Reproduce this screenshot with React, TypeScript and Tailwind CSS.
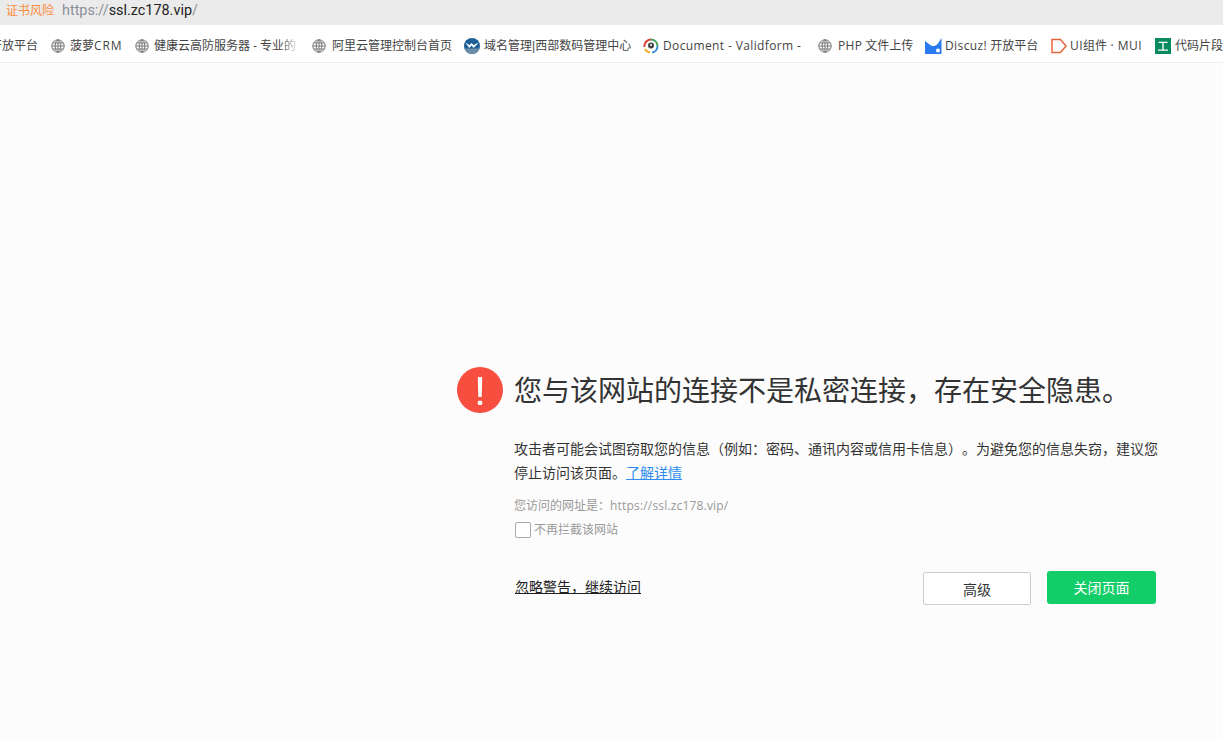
import React from "react";

const font = { fontFamily: '"Open Sans", "Noto Sans CJK SC", sans-serif' };

function GlobeIcon() {
  return (
    <svg width="14" height="14" viewBox="0 0 14 14" fill="none" stroke="#777" strokeWidth="1" className="shrink-0">
      <circle cx="7" cy="7" r="6.2" />
      <ellipse cx="7" cy="7" rx="2.8" ry="6.2" />
      <path d="M7 .8v12.4M.8 7h12.4M1.6 4h10.8M1.6 10h10.8" />
    </svg>
  );
}

function WestIcon() {
  return (
    <svg width="16" height="16" viewBox="0 0 16 16" className="shrink-0">
      <circle cx="8" cy="8" r="8" fill="#1d5f96" />
      <path d="M0.5 10.500h15a8 8 0 0 1-15 0z" fill="#6d8ea8" />
      <path d="M2.500 5.500l2.800 4 2.200-2.600 2.200 2.600 3.800-4-3.700 2-2.300-2-2.200 2z" fill="#fff" stroke="#fff" strokeWidth="0.8" />
    </svg>
  );
}

function ValidIcon() {
  return (
    <svg width="16" height="16" viewBox="0 0 16 16" className="shrink-0" fill="none">
      <path d="M1.500 9A6.500 6.500 0 0 1 8 1.500" stroke="#d9453a" strokeWidth="2" />
      <path d="M8 1.500A6.500 6.500 0 0 1 14.500 8" stroke="#4aa35a" strokeWidth="2" />
      <path d="M14.500 8A6.500 6.500 0 0 1 9 14.500" stroke="#3d8fd6" strokeWidth="2" />
      <path d="M7 14.500A6.500 6.500 0 0 1 2 11" stroke="#f1ac2c" strokeWidth="2" />
      <circle cx="8" cy="7.500" r="3" fill="#444" />
      <circle cx="8" cy="7" r="1" fill="#fff" />
    </svg>
  );
}

function DiscuzIcon() {
  return (
    <svg width="17" height="16" viewBox="0 0 17 16" className="shrink-0">
      <path d="M0 3l6 4.500c2.500 1.500 5.500 0 7-2L16.500 0v16H0z" fill="#2a7bf0" />
      <circle cx="13" cy="12.500" r="2" fill="#fff" />
    </svg>
  );
}

function MuiIcon() {
  return (
    <svg width="16" height="16" viewBox="0 0 16 16" fill="none" className="shrink-0">
      <path d="M1 1.500h8.500L15 8l-5.500 6.500H1z" stroke="#e8643c" strokeWidth="1.500" />
    </svg>
  );
}

function CodeIcon() {
  return (
    <svg width="16" height="16" viewBox="0 0 16 16" className="shrink-0">
      <rect width="16" height="16" fill="#0a8a5f" />
      <path d="M3.500 3.800h9v1.200H8.700v6.500H13v1.200H3v-1.200h4.300V5H3.500z" fill="#fff" />
    </svg>
  );
}

type Item = { icon: React.ReactNode; text: React.ReactNode; width: string; gap: string; fade?: boolean };

function Bookmark({ icon, text, width, gap, fade }: Item) {
  return (
    <div className={`relative flex shrink-0 items-center overflow-hidden whitespace-nowrap ${width} ${gap}`}>
      {icon}
      <span className="text-[12px] text-[#444]">{text}</span>
      {fade && <div className="absolute right-0 top-0 h-full w-5 bg-gradient-to-r from-transparent to-white" />}
    </div>
  );
}

export default function App() {
  return (
    <div className="flex h-[739px] w-[1223px] flex-col overflow-hidden bg-[#fcfcfc] [text-spacing-trim:space-all]" style={font}>
      <div className="flex h-[25px] shrink-0 items-center bg-[#ebebeb] pb-[3px] pl-[6px]">
        <span className="w-[56px] text-[12px] text-[#f98b3d]">证书风险</span>
        <span className="font-['Roboto'] text-[14.4px] text-[#8a8f99]">
          https://<span className="text-[#222]">ssl.zc178.vip</span>/
        </span>
      </div>

      <div className="flex h-[38px] shrink-0 items-center overflow-hidden border-b border-[#eeeeee] bg-white pt-[5px]">
        <div className="ml-[-10px] w-[61px] shrink-0 whitespace-nowrap text-[12px] text-[#444]">开放平台</div>
        <Bookmark
          icon={<GlobeIcon />}
          text={
            <>
              菠萝<span className="tracking-[0.9px]">CRM</span>
            </>
          }
          width="w-[84px]"
          gap="gap-[5px]"
        />
        <Bookmark icon={<GlobeIcon />} text="健康云高防服务器 - 专业的" width="w-[165px]" gap="gap-[5px]" fade />
        <div className="w-[12px] shrink-0" />
        <Bookmark icon={<GlobeIcon />} text="阿里云管理控制台首页" width="w-[152px]" gap="gap-[6px]" />
        <Bookmark
          icon={<WestIcon />}
          text={
            <>
              域名管理<span className="font-['Liberation_Sans']">|</span>西部数码管理中心
            </>
          }
          width="w-[179px]"
          gap="gap-[4px]"
        />
        <Bookmark
          icon={<ValidIcon />}
          text={<span className="tracking-[0.37px]">Document - Validform -</span>}
          width="w-[175px]"
          gap="gap-[4px]"
        />
        <Bookmark
          icon={<GlobeIcon />}
          text={
            <>
              <span className="tracking-[0.3px]">PHP</span> 文件上传
            </>
          }
          width="w-[107px]"
          gap="gap-[6px]"
        />
        <Bookmark
          icon={<DiscuzIcon />}
          text={
            <>
              <span className="tracking-[0.4px]">Discuz!</span> 开放平台
            </>
          }
          width="w-[126px]"
          gap="gap-[3px]"
        />
        <Bookmark
          icon={<MuiIcon />}
          text={
            <>
              <span className="tracking-[0.4px]">UI</span>组件<span className="tracking-[0.5px]"> · MUI</span>
            </>
          }
          width="w-[104px]"
          gap="gap-[3px]"
        />
        <Bookmark icon={<CodeIcon />} text="代码片段" width="w-[68px]" gap="gap-[4px]" />
      </div>

      <div className="flex flex-col pl-[457px] pt-[304px]">
        <div className="flex items-center gap-[11px]">
          <div className="flex h-[46px] w-[46px] shrink-0 items-center justify-center rounded-full bg-[#f74e3f]">
            <svg width="6" height="30" viewBox="0 0 6 30">
              <path d="M.8 2h4.400l-.5 20h-3.400z" fill="#fff" />
              <circle cx="3" cy="27.800" r="2.400" fill="#fff" />
            </svg>
          </div>
          <h1 className="whitespace-nowrap text-[28px] font-normal leading-[46px] text-[#333]">
            您与该网站的连接不是私密连接，存在安全隐患。
          </h1>
        </div>

        <div className="ml-[57px] flex flex-col">
          <p className="mt-[24px] w-[650px] text-[14px] leading-[24px] text-[#333]">
            攻击者可能会试图窃取您的信息（例如：密码、通讯内容或信用卡信息）。为避免您的信息失窃，建议您
            <br />
            停止访问该页面。<span className="text-[#2f8cf0] underline">了解详情</span>
          </p>
          <p className="mt-[9px] text-[12px] leading-[24px] text-[#999]">
            您访问的网址是：<span className="tracking-[0.18px]">https://ssl.zc178.vip/</span>
          </p>
          <label className="flex h-[24px] items-center gap-[3px] text-[12px] text-[#999]">
            <span className="ml-[1px] h-[16px] w-[16px] rounded-[2px] border border-[#aaa] bg-white" />
            不再拦截该网站
          </label>

          <div className="mt-[28px] flex w-[642px] items-center">
            <a className="mb-[2px] ml-[1px] text-[14px] text-[#222] underline">忽略警告，继续访问</a>
            <button className="ml-auto mt-[2px] h-[33px] w-[108px] rounded-[2px] border border-[#cccccc] bg-white pt-[2px] text-[14px] text-[#333]">
              高级
            </button>
            <button className="ml-[16px] h-[33px] w-[109px] rounded-[3px] bg-[#13cd68] text-[14px] text-white">
              关闭页面
            </button>
          </div>
        </div>
      </div>
    </div>
  );
}
